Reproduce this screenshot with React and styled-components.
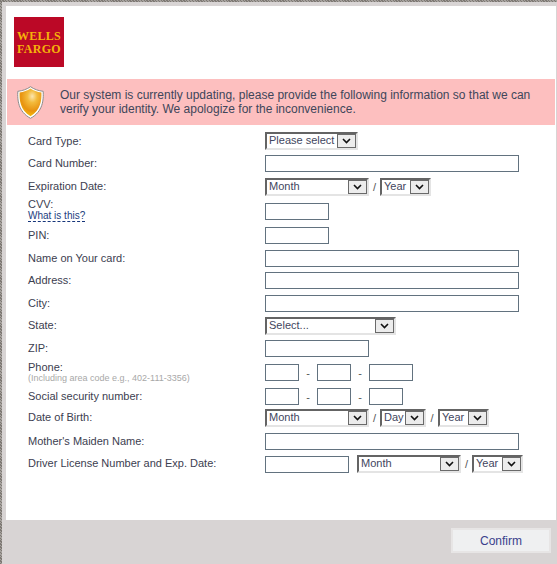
import React from "react";
import styled, { createGlobalStyle } from "styled-components";

const Global = createGlobalStyle`
  html, body { margin: 0; padding: 0; width: 557px; height: 564px; overflow: hidden; }
  body { background: repeating-linear-gradient(45deg, #7d7873 0 1px, #a5a19d 1px 2px); font-family: "Liberation Sans", Arial, sans-serif; }
`;

const Frame = styled.div`
  box-sizing: border-box; width: 555px; height: 562px; margin: 2px 0 0 2px;
  padding: 4px 1px 0 4px; background: #d8d4d4; display: flex; flex-direction: column;
`;
const Sheet = styled.div`
  background: #fff; height: 514px; flex: none; display: flex; flex-direction: column; padding: 0 1px;
`;
const Header = styled.div`
  height: 73px; flex: none; box-sizing: border-box; padding: 11px 0 0 7px;
`;
const Logo = styled.div`
  box-sizing: border-box; width: 50px; height: 50px; padding-top: 2px; background: #bb0826; color: #f5b30a;
  font: bold 12px/13px "Liberation Serif", serif; letter-spacing: 0.3px;
  text-align: center; display: flex; flex-direction: column; justify-content: center;
`;
const Banner = styled.div`
  height: 46px; flex: none; background: #fdbfbf; display: flex; align-items: center; color: #40465a;
  font-size: 12px; line-height: 14px;
`;
const ShieldWrap = styled.div`
  width: 53px; flex: none; padding-left: 10px; box-sizing: border-box; display: flex;
`;
const Form = styled.div` padding: 5px 0 0 21px; font-size: 11px; color: #3c4050; `;
const Row = styled.div`
  height: ${p => p.$h}px; display: flex; align-items: center;
`;
const Label = styled.div`
  width: 237px; flex: none; line-height: 12px; margin-top: ${p => (p.$low ? 0 : -2)}px;
`;
const Hint = styled.div` font-size: 9px; line-height: 10px; color: #a8a8a8; `;
const Help = styled.div`
  font-size: 10px; line-height: 11px; color: #22407e; width: fit-content;
  border-bottom: 1px dashed #16357a;
`;
const Controls = styled.div` display: flex; align-items: center; `;
const Input = styled.div`
  box-sizing: border-box; width: ${p => p.$w}px; height: 17px; border: 1px solid #62727f; background: #fff; flex: none;
`;
const Sep = styled.span`
  width: ${p => p.$w}px; text-align: center; color: #555; flex: none;
`;
const Select = styled.div`
  box-sizing: border-box; width: ${p => p.$w}px; height: 18px; flex: none; display: flex; align-items: stretch;
  border-style: solid; border-width: 2px;
  border-color: #646464 #e4e4e4 #e4e4e4 #646464; background: #fff;
  font-size: 11px; color: #3f4660; line-height: 13px; padding-left: 2px;
  ${p => p.$gap ? `margin-left: ${p.$gap}px;` : ""}
`;
const SelectText = styled.span` flex: 1; white-space: nowrap; overflow: hidden; `;
const Arrow = styled.span`
  box-sizing: border-box; width: 19px; flex: none; border: 1px solid #6a6a6a; background: #ececec;
  display: flex; align-items: center; justify-content: center;
`;
const Footer = styled.div`
  flex: 1; display: flex; justify-content: flex-end; padding: 8px 5px 0 0;
`;
const Button = styled.div`
  box-sizing: border-box; width: 100px; height: 25px; background: #eff0f1; border: 2px solid #e7e5e5;
  color: #3a3f8c; font-size: 12px; display: flex; align-items: center; justify-content: center;
`;

const Chev = () => (
  <svg width="9" height="6" viewBox="0 0 9 6"><path d="M1 1l3.5 3.5L8 1" fill="none" stroke="#111" strokeWidth="1.6" /></svg>
);
const Sel = ({ w, gap, children }) => (
  <Select $w={w} $gap={gap}><SelectText>{children}</SelectText><Arrow><Chev /></Arrow></Select>
);
const Shield = () => (
  <svg width="27" height="33" viewBox="0 0 27 33">
    <defs>
      <radialGradient id="g" cx="0.58" cy="0.28" r="0.75">
        <stop offset="0" stopColor="#fbe6b0" />
        <stop offset="0.3" stopColor="#f3bb3c" />
        <stop offset="0.7" stopColor="#e8920f" />
        <stop offset="1" stopColor="#f5c20a" />
      </radialGradient>
    </defs>
    <path d="M13.5 .7C10 3.2 5.5 4.8 .8 5.3 .4 14 1 25.5 13.5 32.3 26 25.5 26.6 14 26.2 5.3 21.5 4.8 17 3.2 13.5 .7Z" fill="#fff" stroke="#8c8c8c" strokeWidth="1" />
    <path d="M13.5 2.6C10.5 4.7 6.6 6 2.6 6.6 2.4 14 3 24.2 13.5 30.3 24 24.2 24.6 14 24.4 6.6 20.4 6 16.5 4.7 13.5 2.6Z" fill="url(#g)" />
  </svg>
);

export default function App() {
  return (
    <>
      <Global />
      <Frame>
        <Sheet>
          <Header><Logo><span>WELLS</span><span>FARGO</span></Logo></Header>
          <Banner>
            <ShieldWrap><Shield /></ShieldWrap>
            <div>Our system is currently updating, please provide the following information so that we can<br />verify your identity. We apologize for the inconvenience.</div>
          </Banner>
          <Form>
            <Row $h={22}><Label $low>Card Type:</Label><Controls><Sel w={93}>Please select</Sel></Controls></Row>
            <Row $h={23}><Label>Card Number:</Label><Input $w={254} /></Row>
            <Row $h={23}><Label>Expiration Date:</Label><Controls><Sel w={104}>Month</Sel><Sep $w={11}>/</Sep><Sel w={51}>Year</Sel></Controls></Row>
            <Row $h={26}><Label>CVV:<Help>What is this?</Help></Label><Input $w={64} /></Row>
            <Row $h={23}><Label>PIN:</Label><Input $w={64} /></Row>
            <Row $h={22}><Label $low>Name on Your card:</Label><Input $w={254} /></Row>
            <Row $h={23}><Label>Address:</Label><Input $w={254} /></Row>
            <Row $h={23}><Label>City:</Label><Input $w={254} /></Row>
            <Row $h={22}><Label>State:</Label><Controls><Sel w={131}>Select...</Sel></Controls></Row>
            <Row $h={23}><Label>ZIP:</Label><Input $w={104} /></Row>
            <Row $h={25}><Label>Phone:<Hint>(Including area code e.g., 402-111-3356)</Hint></Label><Controls><Input $w={34} /><Sep $w={18}>-</Sep><Input $w={34} /><Sep $w={18}>-</Sep><Input $w={44} /></Controls></Row>
            <Row $h={23}><Label>Social security number:</Label><Controls><Input $w={34} /><Sep $w={18}>-</Sep><Input $w={34} /><Sep $w={18}>-</Sep><Input $w={34} /></Controls></Row>
            <Row $h={20}><Label>Date of Birth:</Label><Controls><Sel w={104}>Month</Sel><Sep $w={11}>/</Sep><Sel w={46}>Day</Sel><Sep $w={12}>/</Sep><Sel w={51}>Year</Sel></Controls></Row>
            <Row $h={27}><Label>Mother's Maiden Name:</Label><Input $w={254} /></Row>
            <Row $h={18}><Label>Driver License Number and Exp. Date:</Label><Controls><Input $w={84} /><Sel w={104} gap={8}>Month</Sel><Sep $w={11}>/</Sep><Sel w={51}>Year</Sel></Controls></Row>
          </Form>
        </Sheet>
        <Footer><Button>Confirm</Button></Footer>
      </Frame>
    </>
  );
}
